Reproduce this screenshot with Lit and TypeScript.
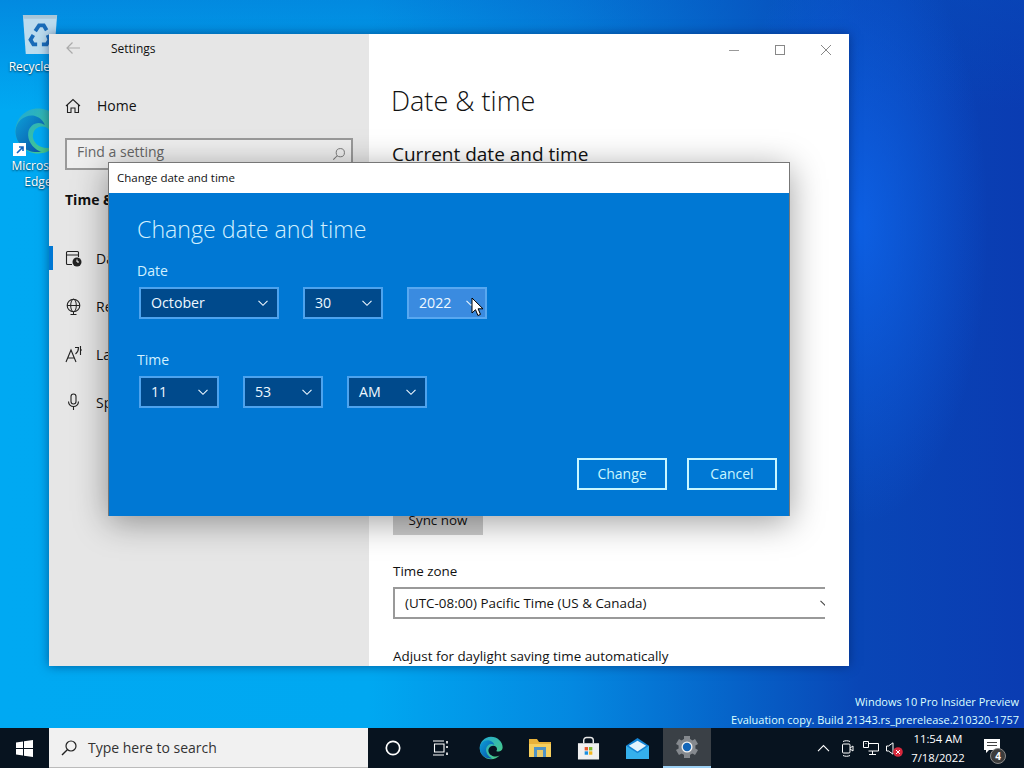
import { LitElement, html, css, svg } from "lit";
import { customElement } from "lit/decorators.js";

const chevron = html`<svg class="chev" viewBox="0 0 12 12" width="12" height="12"><path d="M1.500 3.800 6 8.300l4.500-4.500" fill="none" stroke="currentColor" stroke-width="1.100"/></svg>`;

const edgeDefs = (id: string) => svg`<defs>
  <linearGradient id="${id}a" x1="0" y1="0" x2="1" y2="1"><stop offset="0" stop-color="#0c9fd8"/><stop offset="1" stop-color="#0a4fa4"/></linearGradient>
  <linearGradient id="${id}b" x1="0" y1="0" x2="1" y2="1"><stop offset="0" stop-color="#1fa8d8"/><stop offset="1" stop-color="#4fd07a"/></linearGradient>
</defs>`;

const edge = (id: string, size: number) => html`<svg viewBox="0 0 32 32" width="${size}" height="${size}">${edgeDefs(id)}
  <path d="M16 1C7.500 1 1 8 1 16c0 8.500 6.800 15 15 15 4.600 0 8.500-1.800 11.500-5-3 1.500-6.500 1.700-9.500.5-4-1.500-6.500-5.500-5-9.500 1-2.700 3.500-4 6-4 3 0 5 2 5 4.500 0 1.500-1 2.500-1 2.500 2 1.500 8.500 1 8.500-5C31.500 7.500 24.500 1 16 1Z" fill="url(#${id}b)"/>
  <path d="M1 16C1.500 9 8 4.500 14 6c3.500 1 5.800 3.500 6.500 6-1.300-.8-2.600-1.300-4-1.300-3.500 0-6.500 2.800-7 6.300-.7 5 2.500 10 7.500 12.500.4.200 1 .4 1.500.5h-2.500C8 30.500 1 24.500 1 16Z" fill="url(#${id}a)"/>
</svg>`;

const gearTeeth = [0, 60, 120, 180, 240, 300];

@customElement("app-root")
export class AppRoot extends LitElement {
  static styles = css`
    :host { display: block; width: 1024px; height: 768px; font-family: "Open Sans", "Noto Sans", sans-serif; }
    * { box-sizing: border-box; }
    .screen { width: 1024px; height: 768px; display: flex; flex-direction: column; overflow: hidden; }
    .desktop {
      flex: 1; position: relative; overflow: hidden;
      background:
        radial-gradient(ellipse 130px 300px at 858px 225px, rgba(14,100,235,.85) 0%, rgba(14,100,235,0) 100%),
        linear-gradient(180deg, rgba(6,80,190,.35) 0, rgba(6,80,190,0) 110px),
        linear-gradient(90deg, #00a9f2 0%, #00a8f1 36%, #0488e0 56%, #0662c8 72%, #0946b6 84%, #0a3cb2 100%);
    }
    .dicon { position: absolute; width: 72px; display: flex; flex-direction: column; align-items: center; color: #fff; font-size: 12px; line-height: 16px; text-shadow: 0 1px 2px rgba(0,0,0,.7); text-align: center; }
    .recycle { top: 9px; left: 4px; }
    .edgeicon { top: 103px; left: 2px; }
    .dicon .art { position: relative; display: flex; align-items: center; justify-content: center; }
    .recycle .art { height: 50px; }
    .edgeicon .art { height: 55px; }
    .shortcut { position: absolute; left: -1px; bottom: 2px; width: 13px; height: 13px; background: #fff; display: flex; align-items: center; justify-content: center; }
    .window { position: absolute; left: 49px; top: 34px; width: 800px; height: 632px; display: grid; grid-template-columns: 320px 480px; box-shadow: 0 0 10px rgba(0,20,70,.5); overflow: hidden; }
    .side { background: #e6e6e6; padding: 0 16px; color: #111; display: flex; flex-direction: column; position: relative; }
    .titlebar { height: 30px; display: flex; align-items: center; font-size: 12px; gap: 30px; padding-bottom: 2px; }
    .titlebar .back { width: 16px; display: flex; }
    .home { display: flex; align-items: center; gap: 16px; margin-top: 25px; height: 32px; font-size: 14px; padding-top: 1px; }
    .homeicon { width: 16px; display: flex; }
    .find { margin-top: 17px; height: 32px; width: 288px; border: 2px solid #999; background: #eee; color: #666; font-size: 14px; display: flex; align-items: center; justify-content: space-between; padding: 0 5px 6px 10px; }
    .find svg { transform: translateY(3px); }
    .group { margin-top: 18px; height: 24px; line-height: 24px; font-size: 14px; font-weight: 700; }
    .nav { display: flex; flex-direction: column; margin-top: 22px; }
    .nav-item { height: 48px; display: flex; align-items: center; gap: 14px; font-size: 14px; position: relative; }
    .nav-item .ico { width: 17px; display: flex; justify-content: center; }
    .nav-item.active::before { content: ""; position: absolute; left: -16px; top: 12px; width: 4px; height: 24px; background: #0078d4; }
    .main { background: #fff; padding-left: 22px; color: #111; position: relative; overflow: hidden; }
    .winctl { position: absolute; right: 0; top: 0; display: flex; }
    .winctl span { width: 46px; height: 32px; display: flex; align-items: center; justify-content: center; }
    h1 { margin: 48px 0 0; height: 38px; line-height: 38px; font-size: 27px; font-weight: 300; }
    h2 { margin: 21px 0 0 1px; font-size: 19px; font-weight: 400; line-height: 26px; }
    .sync { margin: 336px 0 0 2px; width: 90px; height: 32px; background: #ccc; font-size: 13.4px; display: flex; align-items: center; justify-content: center; padding-top: 2px; }
    .tzl { margin: 26px 0 0 2px; font-size: 13.4px; line-height: 20px; }
    .tzclip { margin: 6px 0 0 2px; width: 432px; overflow: hidden; }
    .tz { width: 450px; height: 32px; border: 2px solid #999; font-size: 13.4px; display: flex; align-items: center; justify-content: space-between; padding: 0 10px; }
    .tz .chev { color: #444; }
    .adj { margin: 27px 0 0 2px; font-size: 13.4px; line-height: 20px; white-space: nowrap; }
    .dialog { position: absolute; left: 108px; top: 162px; width: 682px; height: 354px; background: #0078d4; border: 1px solid #777; border-bottom: 0; box-shadow: 0 6px 32px rgba(0,0,0,.38); display: flex; flex-direction: column; }
    .dtitle { height: 30px; background: #fff; color: #111; font-size: 11.5px; display: flex; align-items: center; padding: 0 0 2px 8px; flex: none; }
    .dbody { flex: 1; padding: 0 12px 26px 28px; color: #d2f0ff; display: flex; flex-direction: column; position: relative; }
    .dh { margin: 19px 0 0; font-size: 23.2px; font-weight: 300; line-height: 34px; }
    .lab { font-size: 14px; line-height: 20px; }
    .lab.date { margin-top: 15px; }
    .lab.time { margin-top: 31px; }
    .row { display: flex; gap: 24px; margin: 6px 0 0 2px; }
    .sel { height: 32px; background: #004a8c; border: 2px solid #4da3ee; color: #eef8ff; font-size: 14.2px; display: flex; align-items: center; justify-content: space-between; padding: 0 8px 2px 10px; }
    .sel .chev { transform: translateY(1px); }
    .sel.w140 { width: 140px; } .sel.w80 { width: 80px; }
    .sel.hover { background: #3a8be0; border-color: #58a8f0; }
    .btns { margin-top: auto; display: flex; justify-content: flex-end; gap: 20px; }
    .btn { width: 90px; height: 32px; border: 2px solid #c8f6ff; color: #c8f6ff; font-size: 14px; display: flex; align-items: center; justify-content: center; padding-bottom: 1px; }
    .cursor { position: absolute; left: 471px; top: 297px; }
    .wm { position: absolute; right: 5px; bottom: -1px; text-align: right; color: #dff; font-size: 11px; line-height: 18px; }
    .taskbar { height: 40px; flex: none; background: #07131f; display: flex; align-items: stretch; color: #fff; }
    .start { width: 49px; display: flex; align-items: center; justify-content: center; }
    .search { width: 319px; background: #f1f1f1; border-bottom: 1px solid #bbb; color: #333; font-size: 14px; display: flex; align-items: center; gap: 11px; padding-left: 12px; }
    .tasks { display: flex; }
    .tb { width: 49px; display: flex; align-items: center; justify-content: center; }
    .tb.tv { padding-right: 3px; }
    .tb.active { background: #3a4046; border-bottom: 2px solid #9cd0f4; width: 48px; margin-left: 1px; }
    .tray { margin-left: auto; display: flex; align-items: center; padding-right: 11px; }
    .ti { display: flex; width: 24px; justify-content: center; }
    .ti.vol { width: 22px; position: relative; justify-content: flex-start; padding-left: 3px; }
    .volx { position: absolute; left: 10px; top: 5px; }
    .clock { width: 66px; text-align: center; font-size: 11.3px; line-height: 19px; }
    .noti { width: 42px; position: relative; display: flex; justify-content: center; align-items: center; height: 40px; padding-bottom: 5px; }
    .badge { position: absolute; left: 19px; top: 20px; width: 16px; height: 16px; border-radius: 50%; background: #3c3c3c; border: 1px solid #8a8a8a; font-size: 10px; font-weight: 700; line-height: 14px; text-align: center; color: #fff; }
  `;

  private sel(label: string, w: string, hover = false) {
    return html`<div class="sel ${w} ${hover ? "hover" : ""}"><span>${label}</span>${chevron}</div>`;
  }

  private navItem(label: string, icon: unknown, active = false) {
    return html`<div class="nav-item ${active ? "active" : ""}"><span class="ico">${icon}</span><span>${label}</span></div>`;
  }

  render() {
    return html`<div class="screen">
      <div class="desktop">
        <div class="dicon recycle">
          <div class="art">
            <svg viewBox="0 0 40 46" width="38" height="46">
              <path d="M2 3h36l-3 41H5Z" fill="#cfe3ee" opacity=".9"/>
              <path d="M2 3h36l-.5 4H2.500Z" fill="#a8c6d8"/>
              <g fill="none" stroke="#1a6cb8" stroke-width="4">
                <path d="M15 20l4-6 5 0 3 5"/><path d="M28 24l2 5-3 5h-5"/><path d="M17 34h-4l-3-5 3-5"/>
              </g>
            </svg>
          </div>
          <span>Recycle Bin</span>
        </div>
        <div class="dicon edgeicon">
          <div class="art">${edge("d", 48)}
            <span class="shortcut"><svg viewBox="0 0 10 10" width="10" height="10"><path d="M2 8 7.500 2.500M4 2h4v4" fill="none" stroke="#1565c0" stroke-width="1.600"/></svg></span>
          </div>
          <span>Microsoft<br />Edge</span>
        </div>

        <div class="window">
          <div class="side">
            <div class="titlebar">
              <span class="back"><svg viewBox="0 0 16 16" width="16" height="16"><path d="M15 8H2M7.500 2.500 2 8l5.500 5.500" fill="none" stroke="#aaa" stroke-width="1.200"/></svg></span>
              <span>Settings</span>
            </div>
            <div class="home"><span class="homeicon"><svg viewBox="0 0 16 16" width="16" height="16"><path d="M1 8 8 1.500 15 8M2.500 7v7.500H6V10h4v4.500h3.500V7" fill="none" stroke="#222" stroke-width="1.100"/></svg></span><span>Home</span></div>
            <div class="find"><span>Find a setting</span>
              <svg viewBox="0 0 16 16" width="14" height="14"><circle cx="9.500" cy="6.500" r="4.700" fill="none" stroke="#777" stroke-width="1.100"/><path d="M6 10 1.500 14.500" stroke="#777" stroke-width="1.200"/></svg></div>
            <div class="group">Time &amp; Language</div>
            <div class="nav">
              ${this.navItem("Date & time", html`<svg viewBox="0 0 17 17" width="17" height="17"><path d="M7 14.500H2.500a1 1 0 0 1-1-1V2.500a1 1 0 0 1 1-1h10a1 1 0 0 1 1 1V7M1.500 5h12" fill="none" stroke="#222" stroke-width="1.100"/><circle cx="12" cy="12" r="4.500" fill="#222"/><path d="M12 9.500V12h2" stroke="#fff" fill="none"/></svg>`, true)}
              ${this.navItem("Region", html`<svg viewBox="0 0 17 17" width="17" height="17"><circle cx="8.500" cy="7.500" r="6.300" fill="none" stroke="#222" stroke-width="1.100"/><ellipse cx="8.500" cy="7.500" rx="2.800" ry="6.300" fill="none" stroke="#222" stroke-width="1"/><path d="M2.200 7.500h12.600M8.500 14v2.500M5.500 16.500h6" stroke="#222" stroke-width="1"/></svg>`)}
              ${this.navItem("Language", html`<svg viewBox="0 0 17 18" width="17" height="18"><path d="M1 17 6 5l5 12M2.800 13h6.400M10 2.500h3.500c0 3-1 5-3 6.500M15.500 1v9M15.500 5H17" fill="none" stroke="#222" stroke-width="1.100"/></svg>`)}
              ${this.navItem("Speech", html`<svg viewBox="0 0 17 18" width="17" height="18"><rect x="6" y="1" width="5" height="10" rx="2.500" fill="none" stroke="#222" stroke-width="1.100"/><path d="M3.500 8.500c0 3 2.200 5 5 5s5-2 5-5M8.500 13.500V17" fill="none" stroke="#222" stroke-width="1.100"/></svg>`)}
            </div>
          </div>
          <div class="main">
            <div class="winctl">
              <span><svg viewBox="0 0 12 12" width="12" height="12"><path d="M1 6.500h10" stroke="#999"/></svg></span>
              <span><svg viewBox="0 0 12 12" width="12" height="12"><rect x="1.500" y="1.500" width="9" height="9" fill="none" stroke="#888"/></svg></span>
              <span><svg viewBox="0 0 12 12" width="12" height="12"><path d="M1 1l10 10M11 1 1 11" stroke="#888"/></svg></span>
            </div>
            <h1>Date &amp; time</h1>
            <h2>Current date and time</h2>
            <div class="sync">Sync now</div>
            <div class="tzl">Time zone</div>
            <div class="tzclip"><div class="tz"><span>(UTC-08:00) Pacific Time (US &amp; Canada)</span>${chevron}</div></div>
            <div class="adj">Adjust for daylight saving time automatically</div>
          </div>
        </div>

        <div class="dialog">
          <div class="dtitle">Change date and time</div>
          <div class="dbody">
            <div class="dh">Change date and time</div>
            <div class="lab date">Date</div>
            <div class="row">${this.sel("October", "w140")}${this.sel("30", "w80")}${this.sel("2022", "w80", true)}</div>
            <div class="lab time">Time</div>
            <div class="row">${this.sel("11", "w80")}${this.sel("53", "w80")}${this.sel("AM", "w80")}</div>
            <div class="btns"><div class="btn">Change</div><div class="btn">Cancel</div></div>
          </div>
        </div>

        <svg class="cursor" viewBox="0 0 14 20" width="14" height="20"><path d="M1 1v15l3.500-3.300 2.400 5.800 2.600-1.100-2.400-5.600H12Z" fill="#fff" stroke="#000" stroke-width="1"/></svg>

        <div class="wm">Windows 10 Pro Insider Preview<br />Evaluation copy. Build 21343.rs_prerelease.210320-1757</div>
      </div>

      <div class="taskbar">
        <div class="start"><svg viewBox="0 0 17 17" width="17" height="17"><path d="M0 2.400 7 1.400V8H0ZM8 1.300 17 0v8H8ZM0 9h7v6.600l-7-1ZM8 9h9v8l-9-1.300Z" fill="#fff"/></svg></div>
        <div class="search">
          <svg viewBox="0 0 16 16" width="16" height="16"><circle cx="10" cy="6" r="5" fill="none" stroke="#222" stroke-width="1.200"/><path d="M6.300 9.700 1 15" stroke="#222" stroke-width="1.400"/></svg>
          <span>Type here to search</span>
        </div>
        <div class="tasks">
          <div class="tb"><svg viewBox="0 0 16 16" width="16" height="16"><circle cx="8" cy="8" r="6.700" fill="none" stroke="#fff" stroke-width="1.700"/></svg></div>
          <div class="tb tv"><svg viewBox="0 0 17 16" width="17" height="16"><path d="M1 1h11M1 15h11M2.500 4h9.500v8H2.500Z" fill="none" stroke="#fff" stroke-width="1.100"/><path d="M15 1v2.500M15 6v2M15 12.500V15" stroke="#fff" stroke-width="1.600"/></svg></div>
          <div class="tb">${edge("t", 24)}</div>
          <div class="tb"><svg viewBox="0 0 22 20" width="22" height="20"><path d="M0 1h8l2 3h12v15H0Z" fill="#e8b23a"/><path d="M0 6h22v13H0Z" fill="#f6cf5e"/><path d="M5 9h12v10H5Z" fill="#4f93c6"/><path d="M8 12h6v7H8Z" fill="#e8c868"/></svg></div>
          <div class="tb"><svg viewBox="0 0 24 24" width="23" height="24"><path d="M7 7V4a3 3 0 0 1 3-3h4a3 3 0 0 1 3 3v3" fill="none" stroke="#e8e8e8" stroke-width="1.500"/><rect x="1" y="7" width="22" height="17" fill="#f0f0f0"/><rect x="8" y="11" width="3.500" height="3.500" fill="#e8542a"/><rect x="12.500" y="11" width="3.500" height="3.500" fill="#7cbb2a"/><rect x="8" y="15.500" width="3.500" height="3.500" fill="#1a8fe0"/><rect x="12.500" y="15.500" width="3.500" height="3.500" fill="#f5b81e"/></svg></div>
          <div class="tb"><svg viewBox="0 0 26 24" width="25" height="23"><path d="M1 9 13 1l12 8v14H1Z" fill="#1484d4"/><path d="M4 9 13 4l9 5-9 6Z" fill="#e4f4fc"/><path d="M1 9l12 8 12-8v14H1Z" fill="#35b0ec"/></svg></div>
          <div class="tb active"><svg viewBox="0 0 24 24" width="24" height="24">
            ${gearTeeth.map((a) => svg`<rect x="9" y="1" width="6" height="6" fill="#85898e" transform="rotate(${a} 12 12)"/>`)}
            <circle cx="12" cy="12" r="8.500" fill="#85898e"/><circle cx="12" cy="12" r="5.500" fill="#f2f2f2"/><circle cx="12" cy="12" r="4.200" fill="#1466b8"/></svg></div>
        </div>
        <div class="tray">
          <div class="ti"><svg viewBox="0 0 13 8" width="13" height="8"><path d="M1 7.200 6.500 1.500 12 7.200" fill="none" stroke="#fff" stroke-width="1.100"/></svg></div>
          <div class="ti"><svg viewBox="0 0 13 17" width="13" height="17"><rect x="1.500" y="4" width="7.500" height="9" rx="1" fill="none" stroke="#fff"/><path d="M9 8l3-2v5l-3-2M2 1.500c2-1 5-1 7 0M2 15.500c2 1 5 1 7 0" fill="none" stroke="#fff"/></svg></div>
          <div class="ti"><svg viewBox="0 0 16 14" width="16" height="14"><path d="M5.500 2.500h10V10h-10M.5.500h5v6h-5ZM9.500 10v3M6 13.500h7M2.500 2.500h1" fill="none" stroke="#fff"/></svg></div>
          <div class="ti vol"><svg viewBox="0 0 8 13" width="8" height="13"><path d="M.5 4h2L7 .8v11.400L2.500 9h-2Z" fill="none" stroke="#fff"/></svg><svg class="volx" viewBox="0 0 10 10" width="10" height="10"><circle cx="5" cy="5" r="4.800" fill="#d8283c"/><path d="M3 3l4 4M7 3 3 7" stroke="#fff"/></svg></div>
          <div class="clock">11:54 AM<br />7/18/2022</div>
          <div class="noti">
            <svg viewBox="0 0 16 14" width="16" height="14"><path d="M0 0h16v11H5l-3 3v-3H0Z" fill="#fff"/><path d="M3 3.500h10M3 6.500h10" stroke="#444"/></svg>
            <span class="badge">4</span>
          </div>
        </div>
      </div>
    </div>`;
  }
}
